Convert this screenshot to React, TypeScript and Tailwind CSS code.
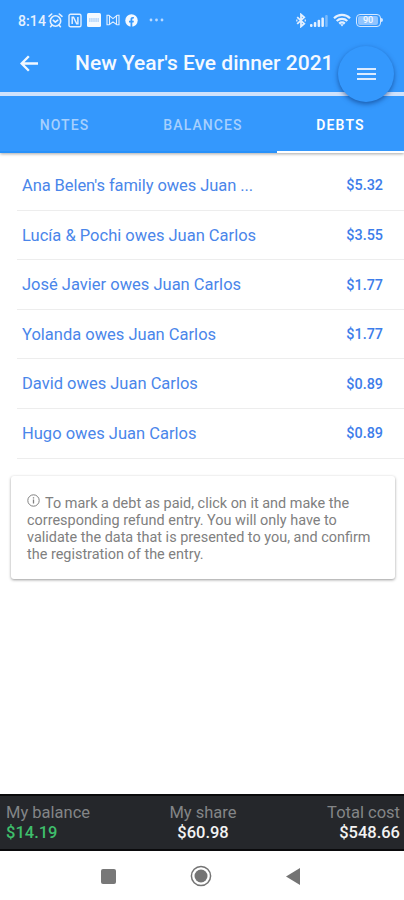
import clsx from 'clsx';

interface Debt {
  text: string;
  amount: string;
}

const debts: Debt[] = [
  { text: "Ana Belen's family owes Juan ...", amount: '$5.32' },
  { text: 'Lucía & Pochi owes Juan Carlos', amount: '$3.55' },
  { text: 'José Javier owes Juan Carlos', amount: '$1.77' },
  { text: 'Yolanda owes Juan Carlos', amount: '$1.77' },
  { text: 'David owes Juan Carlos', amount: '$0.89' },
  { text: 'Hugo owes Juan Carlos', amount: '$0.89' },
];

const tabs = ['NOTES', 'BALANCES', 'DEBTS'];

function StatusBar() {
  return (
    <div className="flex h-10 items-center pl-[18px] pr-[21px] text-[#e4f0ff]">
      <span className="w-[30px] whitespace-nowrap pt-[2px] text-[14px] font-medium leading-none tracking-[0.1px]">8:14</span>
      {/* alarm */}
      <svg className="h-[15px] w-[15px]" viewBox="0 0 15 15" fill="none" stroke="currentColor" strokeWidth="1.6" strokeLinecap="round">
        <circle cx="7.5" cy="8" r="5.2" />
        <path d="M1 3.3 3.7 1M14 3.3 11.3 1M5.3 7.3l2 1.9 2.5-2M3.6 12.5l-1 1.2M11.4 12.5l1 1.2" />
      </svg>
      {/* nfc */}
      <svg className="ml-[5px] h-[15px] w-[14px]" viewBox="0 0 14 15" fill="none" stroke="currentColor">
        <rect x="1" y="1.2" width="12" height="12.6" rx="1.6" strokeWidth="1.4" />
        <path d="M4.2 11V4.2h1.3l3.2 6.6h1.2V4" strokeWidth="1.5" />
      </svg>
      <svg className="ml-[5px] h-[14px] w-[14px]" viewBox="0 0 14 14">
        <rect width="14" height="14" rx="1.5" fill="#f4f9ff" />
        <path d="M2 6h10M2 8h10" stroke="#a9cdf6" strokeWidth="1.3" strokeDasharray="1.6 .5" />
      </svg>
      {/* mail */}
      <svg className="ml-[5px] h-[12px] w-[14px]" viewBox="0 0 14 12" fill="none" stroke="currentColor" strokeWidth="1.1">
        <path d="M1 10.8V1.2h1.8L7 4.6l4.2-3.4H13v9.6h-2.2L7 7.9l-3.8 2.9z" />
        <path d="M3.5 1.500v9M10.500 1.500v9" />
      </svg>
      {/* facebook */}
      <svg className="ml-[5px] h-[13px] w-[13px]" viewBox="0 0 13 13">
        <circle cx="6.5" cy="6.5" r="6.2" fill="#f4f9ff" />
        <path d="M5.500 13V8.500H4V6.700h1.500V5.300c0-1.600.9-2.400 2.300-2.400h1.100v1.600h-.8c-.6 0-.8.3-.8.8v1.400h1.600l-.3 1.800H7.300V13z" fill="#3498fd" />
      </svg>
      <svg className="ml-[11px] h-[4px] w-[15px]" viewBox="0 0 15 4" fill="#b9d9ff">
        <circle cx="2" cy="2" r="1.4" />
        <circle cx="7.5" cy="2" r="1.4" />
        <circle cx="13" cy="2" r="1.4" />
      </svg>
      {/* bluetooth */}
      <svg className="ml-auto h-[15px] w-[10px]" viewBox="0 0 10 15" fill="none" stroke="currentColor" strokeWidth="1.8">
        <path d="m1.200 4.200 7 6.500L5 13.500v-12l3.200 2.800-7 6.500" />
        <path d="M.2 7.500h1.300M8.600 7.500h1.300" />
      </svg>
      {/* signal */}
      <svg className="ml-[4px] mt-[2px] h-[12px] w-[18px]" viewBox="0 0 18 12" fill="currentColor">
        <rect x="0" y="9" width="2.5" height="3" rx="1" />
        <rect x="3.8" y="7" width="2.5" height="5" rx="1" />
        <rect x="7.6" y="4.8" width="2.5" height="7.2" rx="1" />
        <rect x="11.4" y="2.5" width="2.5" height="9.5" rx="1" />
        <rect x="15.2" y="0" width="2.5" height="12" rx="1" opacity=".4" />
      </svg>
      {/* wifi */}
      <svg className="ml-[5px] h-[14px] w-[18px]" viewBox="0 0 18 14" fill="none" stroke="currentColor" strokeWidth="2.2">
        <path d="M1 5.200a11.500 11.500 0 0 1 16 0M3.700 8a7.600 7.600 0 0 1 10.600 0M6.200 10.600a4 4 0 0 1 5.600 0" />
        <path d="M7.700 11.500h2.600L9 13.200z" fill="currentColor" strokeWidth=".5" />
      </svg>
      {/* battery */}
      <div className="ml-[5px] flex items-center">
        <div className="flex h-[13px] w-[25px] items-center rounded-[4px] border border-[#d5e8ff] p-px">
          <div className="flex h-full w-[20px] items-center justify-center rounded-[2px] bg-[#8fc4ff] text-[9px] font-medium leading-none text-[#f4f9ff]">90</div>
        </div>
        <div className="h-[4px] w-[2px] rounded-r bg-[#d5e8ff]" />
      </div>
    </div>
  );
}

function Header() {
  return (
    <header className="relative z-10 bg-[#3498fd] shadow-[0_1px_3px_rgba(0,0,0,0.35)]">
      <StatusBar />
      <div className="flex h-[52px] items-center pb-[6px] pl-5">
        <svg className="h-[17px] w-[19px] text-[#f2f8ff]" viewBox="0 0 20 18" fill="none" stroke="currentColor" strokeWidth="2.5">
          <path d="M19 9H2M9.300 1.300 1.700 9l7.600 7.700" />
        </svg>
        <h1 className="ml-[36px] whitespace-nowrap pt-[2px] text-[21px] font-medium text-[#f4f9ff]">New Year's Eve dinner 2021</h1>
      </div>
      <div className="h-[4px] bg-[#cfe2fc]" />
      <nav className="grid h-[57px] grid-cols-[129px_148px_127px]">
        {tabs.map((tab) => (
          <button
            key={tab}
            className={clsx(
              'border-b-2 pt-[3px] text-[14px] tracking-[1.1px]',
              tab === 'DEBTS'
                ? 'border-white font-semibold text-white'
                : 'border-[#2791fa] font-medium text-[#a6d0fe]',
            )}
          >
            {tab}
          </button>
        ))}
      </nav>
      <button className="absolute left-[338px] top-[46px] flex h-[56px] w-[56px] flex-col items-center justify-center gap-[3px] rounded-full bg-[#3498fd] pb-px shadow-[0_2px_5px_rgba(0,30,90,0.5)]">
        <span className="h-[2px] w-[19px] bg-[#dcebff]" />
        <span className="h-[2px] w-[19px] bg-[#dcebff]" />
        <span className="h-[2px] w-[19px] bg-[#dcebff]" />
      </button>
    </header>
  );
}

function DebtRow({ debt }: { debt: Debt }) {
  return (
    <li className="ml-[17px] flex h-[49.6px] items-center justify-between border-b border-[#ededed] pl-[5px] pr-[21px] pt-[2px] text-[#4a86ea] first:tracking-[-0.08px]">
      <span className="whitespace-nowrap text-[16.5px]">{debt.text}</span>
      <span className="text-[14.4px] font-medium tracking-normal text-[#3d7dea]">{debt.amount}</span>
    </li>
  );
}

function InfoCard() {
  return (
    <div className="ml-[11px] mr-[9px] mt-[17px] h-[103px] rounded-[3px] bg-white pl-4 pt-[18px] text-[14.45px] leading-[17.3px] text-[#808080] shadow-[0_1px_3px_rgba(0,0,0,0.4)]">
      <p className="whitespace-nowrap">
        <svg className="mr-[5px] inline-block h-[13px] w-[13px] align-[1px]" viewBox="0 0 13 13" fill="none" stroke="currentColor">
          <circle cx="6.5" cy="6.5" r="5.7" strokeWidth="1" />
          <path d="M6.500 5.600v4M6.500 3.300v1.300" strokeWidth="1.3" />
        </svg>
        To mark a debt as paid, click on it and make the
      </p>
      <p className="whitespace-nowrap">corresponding refund entry. You will only have to</p>
      <p className="whitespace-nowrap">validate the data that is presented to you, and confirm</p>
      <p className="whitespace-nowrap">the registration of the entry.</p>
    </div>
  );
}

function Totals() {
  return (
    <footer className="grid h-[57px] grid-cols-3 border-y-2 border-[#0a0a0c] bg-[#25272b] pl-[6px] pr-[4px] pt-[7px] text-[16.5px] leading-[20px] text-[#838587]">
      <div>
        <p>My balance</p>
        <p className="font-medium text-[#3fbf6c]">$14.19</p>
      </div>
      <div className="text-center">
        <p>My share</p>
        <p className="font-medium text-[#f3f3f3]">$60.98</p>
      </div>
      <div className="text-right">
        <p>Total cost</p>
        <p className="font-medium text-[#f3f3f3]">$548.66</p>
      </div>
    </footer>
  );
}

function NavigationBar() {
  return (
    <div className="flex h-[49px] items-center pl-[101px] pt-px text-[#747474]">
      <div className="h-[15px] w-[15px] rounded-[2px] bg-[#787878]" />
      <svg className="ml-[74px] h-[22px] w-[22px]" viewBox="0 0 22 22">
        <circle cx="11" cy="11" r="9.6" fill="none" stroke="currentColor" strokeWidth="1.5" />
        <circle cx="11" cy="11" r="6.5" fill="currentColor" />
      </svg>
      <svg className="ml-[74px] h-[17px] w-[14px]" viewBox="0 0 14 17" fill="currentColor">
        <path d="M0 8.500 14 0v17z" />
      </svg>
    </div>
  );
}

export default function App() {
  return (
    <div className="flex h-[900px] w-[404px] flex-col overflow-hidden bg-white font-['Roboto',sans-serif]">
      <Header />
      <main className="flex-1 pt-[8px]">
        <ul>
          {debts.map((debt) => (
            <DebtRow key={debt.text} debt={debt} />
          ))}
        </ul>
        <InfoCard />
      </main>
      <Totals />
      <NavigationBar />
    </div>
  );
}
